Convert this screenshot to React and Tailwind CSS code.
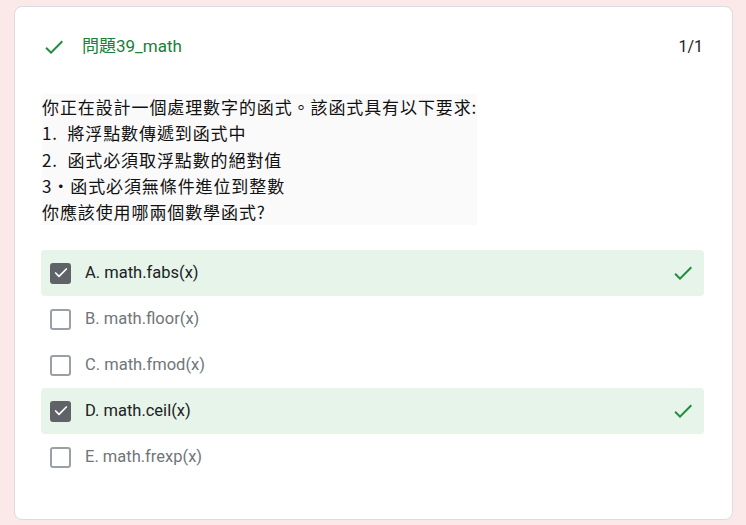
import { Check } from 'lucide-react';

const OPTIONS = [
  { label: 'A. math.fabs(x)', checked: true },
  { label: 'B. math.floor(x)', checked: false },
  { label: 'C. math.fmod(x)', checked: false },
  { label: 'D. math.ceil(x)', checked: true },
  { label: 'E. math.frexp(x)', checked: false },
];

const QUESTION = [
  '你正在設計一個處理數字的函式。該函式具有以下要求:',
  '1.  將浮點數傳遞到函式中',
  '2.  函式必須取浮點數的絕對值',
  '3·函式必須無條件進位到整數',
  '你應該使用哪兩個數學函式?',
];

function CheckIcon({ className }) {
  return (
    <svg viewBox="0 0 24 24" className={className} fill="currentColor">
      <path d="M9 16.17L4.83 12l-1.42 1.41L9 19 21 7l-1.41-1.41z" />
    </svg>
  );
}

function Box({ checked }) {
  if (checked) {
    return (
      <div className="w-[21px] h-[21px] rounded-[3px] bg-[#5f6368] flex items-center justify-center shrink-0">
        <Check className="w-[16px] h-[16px] text-white" strokeWidth={2.5} />
      </div>
    );
  }
  return <div className="w-[21px] h-[21px] rounded-[3px] border-2 border-[#9aa0a6] shrink-0" />;
}

export default function App() {
  return (
    <div
      className="w-[746px] h-[525px] bg-[#fbe8e8] pt-[6px] pl-[14px]"
      style={{ fontFamily: 'Roboto, "Noto Sans CJK TC", sans-serif' }}
    >
      <div className="w-[719px] h-[514px] bg-white rounded-[8px] border border-[#dadce0] pl-[26px] pr-[28px]">
        {/* header */}
        <div className="flex items-center justify-between pt-[21px] h-[59px]">
          <div className="flex items-center">
            <CheckIcon className="w-[24px] h-[24px] text-[#1e8e3e] ml-[1px]" />
            <span className="ml-[16px] text-[17px] text-[#188038]">問題39_math</span>
          </div>
          <span className="text-[16px] text-[#202124] mr-[1px]">1/1</span>
        </div>

        {/* question */}
        <div
          className="mt-[28px] ml-[1px] w-fit bg-[#fafafa] text-[17px] tracking-[0.9px] leading-[26.3px] text-[#111]"
          style={{ fontFamily: '"Noto Sans CJK TC", sans-serif' }}
        >
          {QUESTION.map((line, i) => (
            <div key={i} className="whitespace-pre">{line}</div>
          ))}
        </div>

        {/* options */}
        <div className="mt-[25px] flex flex-col">
          {OPTIONS.map((o, i) => (
            <div
              key={i}
              className={`h-[46px] flex items-center pl-[9px] pr-[9px] rounded-[4px] ${o.checked ? 'bg-[#e6f4ea]' : ''}`}
            >
              <Box checked={o.checked} />
              <span className={`ml-[14px] text-[16.5px] ${o.checked ? 'text-[#202124]' : 'text-[#70757a]'}`}>
                {o.label}
              </span>
              {o.checked && <CheckIcon className="ml-auto w-[24px] h-[24px] text-[#1e8e3e]" />}
            </div>
          ))}
        </div>
      </div>
    </div>
  );
}
